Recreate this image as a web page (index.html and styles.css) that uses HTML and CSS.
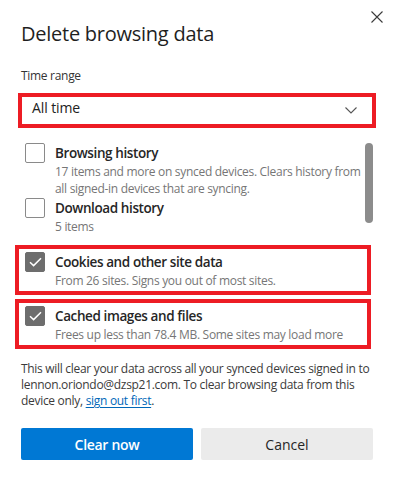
FILE: index.html
```html
<!DOCTYPE html>
<html lang="en">
<head>
<meta charset="utf-8">
<title>Delete browsing data</title>
<link rel="stylesheet" href="styles.css">
</head>
<body>
<div class="dialog">
  <div class="header">
    <h1 class="title">Delete browsing data</h1>
    <button class="close" aria-label="Close">
      <svg width="12" height="12" viewBox="0 0 12 12"><path d="M0.5 0.5L11.5 11.5M11.5 0.5L0.5 11.5" stroke="#3b3b3b" stroke-width="1.1" fill="none"/></svg>
    </button>
  </div>
  <div class="label">Time range</div>
  <div class="select highlight">
    <span class="select-value">All time</span>
    <svg class="chevron" width="12" height="7" viewBox="0 0 12 7"><path d="M0.5 0.5L6 6L11.5 0.5" stroke="#555" stroke-width="1.1" fill="none"/></svg>
  </div>
  <div class="list">
    <div class="item">
      <span class="checkbox"></span>
      <div class="item-text">
        <div class="item-title">Browsing history</div>
        <div class="item-desc">17 items and more on synced devices. Clears history from all signed-in devices that are syncing.</div>
      </div>
    </div>
    <div class="item tight">
      <span class="checkbox"></span>
      <div class="item-text">
        <div class="item-title">Download history</div>
        <div class="item-desc">5 items</div>
      </div>
    </div>
    <div class="item highlight-item">
      <span class="checkbox checked"><svg width="13" height="10" viewBox="0 0 13 10"><path d="M1 5.2L4.6 8.6L12 1.3" stroke="#fff" stroke-width="1.5" fill="none"/></svg></span>
      <div class="item-text">
        <div class="item-title">Cookies and other site data</div>
        <div class="item-desc">From 26 sites. Signs you out of most sites.</div>
      </div>
    </div>
    <div class="item highlight-item">
      <span class="checkbox checked"><svg width="13" height="10" viewBox="0 0 13 10"><path d="M1 5.2L4.6 8.6L12 1.3" stroke="#fff" stroke-width="1.5" fill="none"/></svg></span>
      <div class="item-text">
        <div class="item-title">Cached images and files</div>
        <div class="item-desc">Frees up less than 78.4 MB. Some sites may load more</div>
      </div>
    </div>
    <div class="scroll-thumb"></div>
  </div>
  <p class="note">This will clear your data across all your synced devices signed in to lennon.oriondo@dzsp21.com. To clear browsing data from this device only, <a href="#" class="link">sign out first</a>.</p>
  <div class="actions">
    <button class="btn primary">Clear now</button>
    <button class="btn secondary">Cancel</button>
  </div>
</div>
</body>
</html>
```
FILE: styles.css
```css
* { box-sizing: border-box; }
html, body { margin: 0; padding: 0; background: #fff; }
body {
  font-family: "Open Sans", "Noto Sans", sans-serif;
  color: #1f1f1f;
  width: 396px;
  height: 481px;
  overflow: hidden;
}
.dialog {
  padding: 0 23px 0 21px;
}
.header {
  display: flex;
  justify-content: space-between;
  align-items: flex-start;
}
.title {
  margin: 20px 0 0 0;
  font-size: 20px;
  line-height: 28px;
  font-weight: 400;
  letter-spacing: -0.25px;
  color: #1f1f1f;
}
.close {
  margin: 11px -10px 0 0;
  padding: 0;
  border: 0;
  background: transparent;
  width: 12px;
  height: 12px;
  display: block;
}
.close svg { display: block; }
.label {
  margin-top: 20px;
  font-size: 12px;
  line-height: 16px;
  letter-spacing: -0.3px;
  color: #333;
}
.select {
  margin: 13px 1px 0 1px;
  height: 27px;
  display: flex;
  align-items: center;
  justify-content: space-between;
  padding: 0 15px 5px 10px;
  font-size: 14px;
  line-height: 22px;
  letter-spacing: -0.1px;
  color: #222;
}
.chevron { margin-top: 4px; display: block; }
.highlight {
  outline: 4px solid #ed1c24;
}
.list {
  position: relative;
  margin-top: 19px;
  padding-left: 4px;
}
.item {
  position: relative;
  display: flex;
  align-items: flex-start;
  gap: 10px;
  margin-top: 17px;
  padding-right: 12px;
}
.item:first-child { margin-top: 0; }
.item.tight { margin-top: 1px; }
.checkbox {
  flex: none;
  width: 20px;
  height: 20px;
  border: 1px solid #8a8a8a;
  border-radius: 2px;
  background: #fff;
  display: flex;
  align-items: center;
  justify-content: center;
}
.checkbox.checked {
  background: #6d6d6d;
  border-color: #6d6d6d;
}
.checkbox svg { display: block; }
.item-title {
  font-size: 13.5px;
  line-height: 20px;
  font-weight: 600;
  letter-spacing: -0.4px;
  color: #262626;
}
.item-desc {
  font-size: 12px;
  line-height: 17px;
  letter-spacing: -0.3px;
  color: #767676;
}
.highlight-item::after {
  content: "";
  position: absolute;
  top: -7px;
  bottom: -6px;
  left: -10px;
  right: 2px;
  border: 4px solid #ed1c24;
  pointer-events: none;
}
.scroll-thumb {
  position: absolute;
  top: 0;
  right: 0;
  width: 8px;
  height: 80px;
  border-radius: 4px;
  background: #8c8c8c;
}
.note {
  margin: 18px -4px 0 0;
  font-size: 12px;
  line-height: 16px;
  letter-spacing: -0.3px;
  color: #3b3b3b;
}
.link {
  color: #0067b8;
  text-decoration: underline;
  text-underline-offset: 2px;
}
.actions {
  margin-top: 19px;
  display: grid;
  grid-template-columns: 1fr 1fr;
  gap: 8px;
}
.btn {
  height: 32px;
  border: 0;
  border-radius: 2px;
  font-family: inherit;
  font-size: 14px;
}
.primary {
  background: #0078d4;
  color: #fff;
  font-weight: 600;
  letter-spacing: -0.3px;
}
.secondary {
  background: #ebebeb;
  color: #262626;
}
```
